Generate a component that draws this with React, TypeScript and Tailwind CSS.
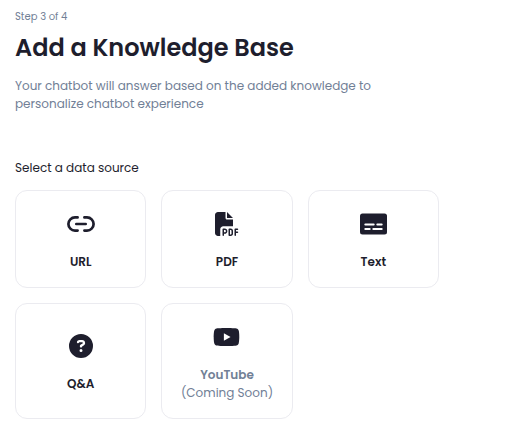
import type { ReactNode } from "react";
import { FaCircleQuestion, FaFilePdf, FaYoutube } from "react-icons/fa6";

const LinkIcon = () => (
  <svg viewBox="0 0 28 16" className="w-7 h-4" fill="none" stroke="currentColor" strokeWidth="2.7" strokeLinecap="round">
    <path d="M10.6 1.4H8a6.6 6.6 0 0 0 0 13.2h2.6" />
    <path d="M17.4 1.4H20a6.6 6.6 0 0 1 0 13.2h-2.6" />
    <path d="M9.3 8h9.4" />
  </svg>
);

const SubtitlesIcon = () => (
  <svg viewBox="0 0 27 24" className="w-[27px] h-6">
    <rect x="0" y="1.5" width="27" height="21" rx="2.5" fill="currentColor" />
    <g stroke="white" strokeWidth="2" strokeLinecap="round">
      <path d="M5.3 12.5h8.4M17.3 12.5h4.4M5.3 17h4.4M13.3 17h8.4" />
    </g>
  </svg>
);

interface SourceCardProps {
  icon: ReactNode;
  label: string;
  note?: string;
}

const SourceCard = ({ icon, label, note }: SourceCardProps) => (
  <div className="flex flex-col items-center justify-center rounded-xl border border-[#ebebf0] bg-white pt-1 text-[#1e1e2d]">
    <div className="flex h-6 items-center justify-center">{icon}</div>
    <p className={`mt-[17px] text-xs leading-[18px] font-semibold ${note ? "text-[#718096]" : ""}`}>{label}</p>
    {note && <p className="text-xs leading-[18px] whitespace-nowrap text-[#718096]">{note}</p>}
  </div>
);

const App = () => {
  return (
    <div className="h-[438px] w-full bg-white px-[15px] pt-[9px] font-['Poppins','Inter',sans-serif] text-[#1e1e2d]">
      <p className="text-[10px] leading-4 text-[#718096]">Step 3 of 4</p>
      <h1 className="mt-[7px] text-2xl leading-8 font-semibold whitespace-nowrap">Add a Knowledge Base</h1>
      <p className="mt-[13px] text-xs leading-[18px] whitespace-nowrap text-[#718096]">
        Your chatbot will answer based on the added knowledge to
        <br />
        personalize chatbot experience
      </p>
      <p className="mt-[46px] text-xs leading-[18px]">Select a data source</p>
      <div className="mt-[13px] grid w-[424px] grid-cols-3 grid-rows-[98px_116px] gap-[15px]">
        <SourceCard icon={<LinkIcon />} label="URL" />
        <SourceCard icon={<FaFilePdf className="size-6" />} label="PDF" />
        <SourceCard icon={<SubtitlesIcon />} label="Text" />
        <SourceCard icon={<FaCircleQuestion className="size-6" />} label="Q&A" />
        <SourceCard icon={<FaYoutube className="h-6 w-[27px]" />} label="YouTube" note="(Coming Soon)" />
      </div>
    </div>
  );
};

export default App;
